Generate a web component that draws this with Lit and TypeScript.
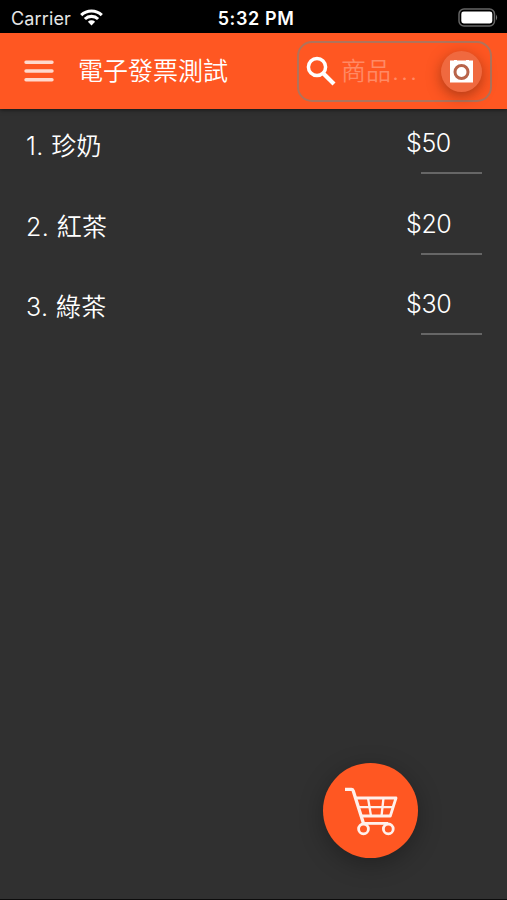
import { LitElement, html, css } from "lit";
import { customElement, property } from "lit/decorators.js";

interface Product {
  name: string;
  price: number;
}

@customElement("status-bar")
class StatusBar extends LitElement {
  static styles = css`
    :host {
      display: grid;
      grid-template-columns: 1fr auto 1fr;
      align-items: center;
      height: 33px;
      box-sizing: border-box;
      padding: 4px 9px 0 11px;
      background: #000;
      color: #fff;
      font-size: 18px;
      line-height: 29px;
    }
    .carrier { display: flex; align-items: center; gap: 9px; color: #e6e6e6; letter-spacing: 0.15px; }
    .wifi { width: 23px; height: 17px; display: block; margin-top: -2px; }
    .time { font-weight: 600; letter-spacing: 0.6px; padding-left: 3px; }
    .battery { justify-self: end; width: 40px; height: 19px; display: block; margin-top: -2px; }
  `;
  render() {
    return html`
      <div class="carrier">
        <span>Carrier</span>
        <svg class="wifi" viewBox="0 0 23 17">
          <g fill="none" stroke="#fff" stroke-width="3.1">
            <path d="M1.2 6.1A14.8 14.8 0 0 1 21.8 6.1" />
            <path d="M4.9 10A9.5 9.5 0 0 1 18.1 10" />
          </g>
          <path fill="#fff" d="M7.9 12.7A5.2 5.2 0 0 1 15.1 12.7L11.5 16.4Z" />
        </svg>
      </div>
      <span class="time">5:32 PM</span>
      <svg class="battery" viewBox="0 0 40 19">
        <rect x="1" y="1" width="35.5" height="17" rx="5" fill="none" stroke="#666" stroke-width="1.5" />
        <rect x="3.3" y="3.5" width="31" height="12" rx="2.4" fill="#fff" />
        <path fill="#777" d="M38 6.5Q40.2 9.5 38 12.5Z" />
      </svg>
    `;
  }
}

@customElement("app-header")
class AppHeader extends LitElement {
  @property() heading = "";
  static styles = css`
    :host {
      display: flex;
      align-items: center;
      height: 76px;
      box-sizing: border-box;
      padding: 0 15px 0 24px;
      background: #ff5722;
      color: #fff;
      box-shadow: 0 1px 4px rgba(0, 0, 0, 0.55);
    }
    .menu { width: 30px; height: 24px; flex: none; }
    .title { margin: 0 0 0 24px; flex: 1; font-size: 25px; line-height: 36px; font-weight: 350; white-space: nowrap; }
    .search {
      display: flex;
      align-items: center;
      width: 195px;
      height: 61px;
      box-sizing: border-box;
      padding: 0 8px 0 7px;
      border: 2px solid #b0735b;
      border-radius: 15px;
    }
    .glass { width: 30px; height: 30px; flex: none; }
    .hint { flex: 1; margin: 0 0 0 5px; font-size: 25px; line-height: 36px; font-weight: 350; color: #ff8a65; white-space: nowrap; }
    .dots { letter-spacing: 1.9px; margin-left: 1px; }
    .camera {
      display: grid;
      place-items: center;
      width: 41px;
      height: 41px;
      border-radius: 50%;
      background: #f0693f;
      box-shadow: 0 4px 14px rgba(90, 30, 10, 0.5);
    }
    .camera svg { width: 23px; height: 23px; }
  `;
  render() {
    return html`
      <svg class="menu" viewBox="0 0 30 24">
        <path d="M2 3.3H28M2 12H28M2 20.7H28" stroke="#ffd9cd" stroke-width="3.4" stroke-linecap="round" />
      </svg>
      <div class="title">${this.heading}</div>
      <div class="search">
        <svg class="glass" viewBox="0 0 30 30">
          <circle cx="11" cy="11" r="8.6" fill="none" stroke="#fff" stroke-width="3.5" />
          <path d="M17.4 17.4L28 28" stroke="#fff" stroke-width="4.2" />
        </svg>
        <span class="hint">商品<span class="dots">...</span></span>
        <span class="camera">
          <svg viewBox="0 0 23 23">
            <path fill="#fff" d="M0 .5H4V0H7V.5H16V0H19V.5H23V22.5H0Z" />
            <circle cx="11.5" cy="12" r="6.5" fill="#fff" stroke="#b8644a" stroke-width="3" />
          </svg>
        </span>
      </div>
    `;
  }
}

@customElement("product-row")
class ProductRow extends LitElement {
  @property({ type: Number }) index = 1;
  @property({ attribute: false }) product: Product = { name: "", price: 0 };
  static styles = css`
    :host {
      display: grid;
      grid-template-columns: 1fr 101px;
      height: 80.5px;
      box-sizing: border-box;
      padding: 16px 0 0 26px;
      color: #fff;
      font-size: 25px;
      line-height: 36px;
      font-weight: 350;
    }
    .name { padding-top: 3px; letter-spacing: 0.4px; }
    .field { display: flex; flex-direction: column; }
    .price { letter-spacing: -0.4px; }
    .line { width: 61px; height: 2px; margin: 11px 0 0 15px; background: #666; }
  `;
  render() {
    return html`
      <div class="name">${this.index}. ${this.product.name}</div>
      <div class="field">
        <span class="price">$${this.product.price}</span>
        <div class="line"></div>
      </div>
    `;
  }
}

@customElement("cart-button")
class CartButton extends LitElement {
  static styles = css`
    :host {
      display: block;
      width: 95px;
      height: 95px;
      border-radius: 50%;
      background: #ff5722;
      box-shadow: 0 6px 24px rgba(0, 0, 0, 0.3);
    }
    svg { display: block; width: 95px; height: 95px; }
  `;
  render() {
    return html`
      <svg viewBox="323 763 95 95">
        <g fill="none" stroke="#fff0eb" stroke-width="2.8" stroke-linejoin="round">
          <path d="M345 789.4H351.5Q352.7 789.4 353.2 790.8L363.5 823.5" stroke-width="3.3" />
          <path d="M355.5 798H396L390.3 816H361" />
          <path d="M358 807.2H393M368 798L371 816M383.5 798L381.5 816" stroke-width="2.3" />
          <path d="M363 823.4H388" />
          <circle cx="363.5" cy="828.9" r="4.9" />
          <circle cx="388.3" cy="828.9" r="4.9" />
        </g>
      </svg>
    `;
  }
}

@customElement("app-root")
class AppRoot extends LitElement {
  private products: Product[] = [
    { name: "珍奶", price: 50 },
    { name: "紅茶", price: 20 },
    { name: "綠茶", price: 30 },
  ];
  static styles = css`
    :host {
      display: flex;
      flex-direction: column;
      position: relative;
      height: 900px;
      box-sizing: border-box;
      overflow: hidden;
      border-bottom: 1px solid #0c0c0c;
      background: #303030;
      font-family: Inter, "Noto Sans CJK TC", sans-serif;
    }
    app-header { position: relative; }
    cart-button { position: absolute; right: 89px; bottom: 41px; }
  `;
  render() {
    return html`
      <status-bar></status-bar>
      <app-header heading="電子發票測試"></app-header>
      <main>
        ${this.products.map(
          (p, i) => html`<product-row .index=${i + 1} .product=${p}></product-row>`,
        )}
      </main>
      <cart-button></cart-button>
    `;
  }
}
